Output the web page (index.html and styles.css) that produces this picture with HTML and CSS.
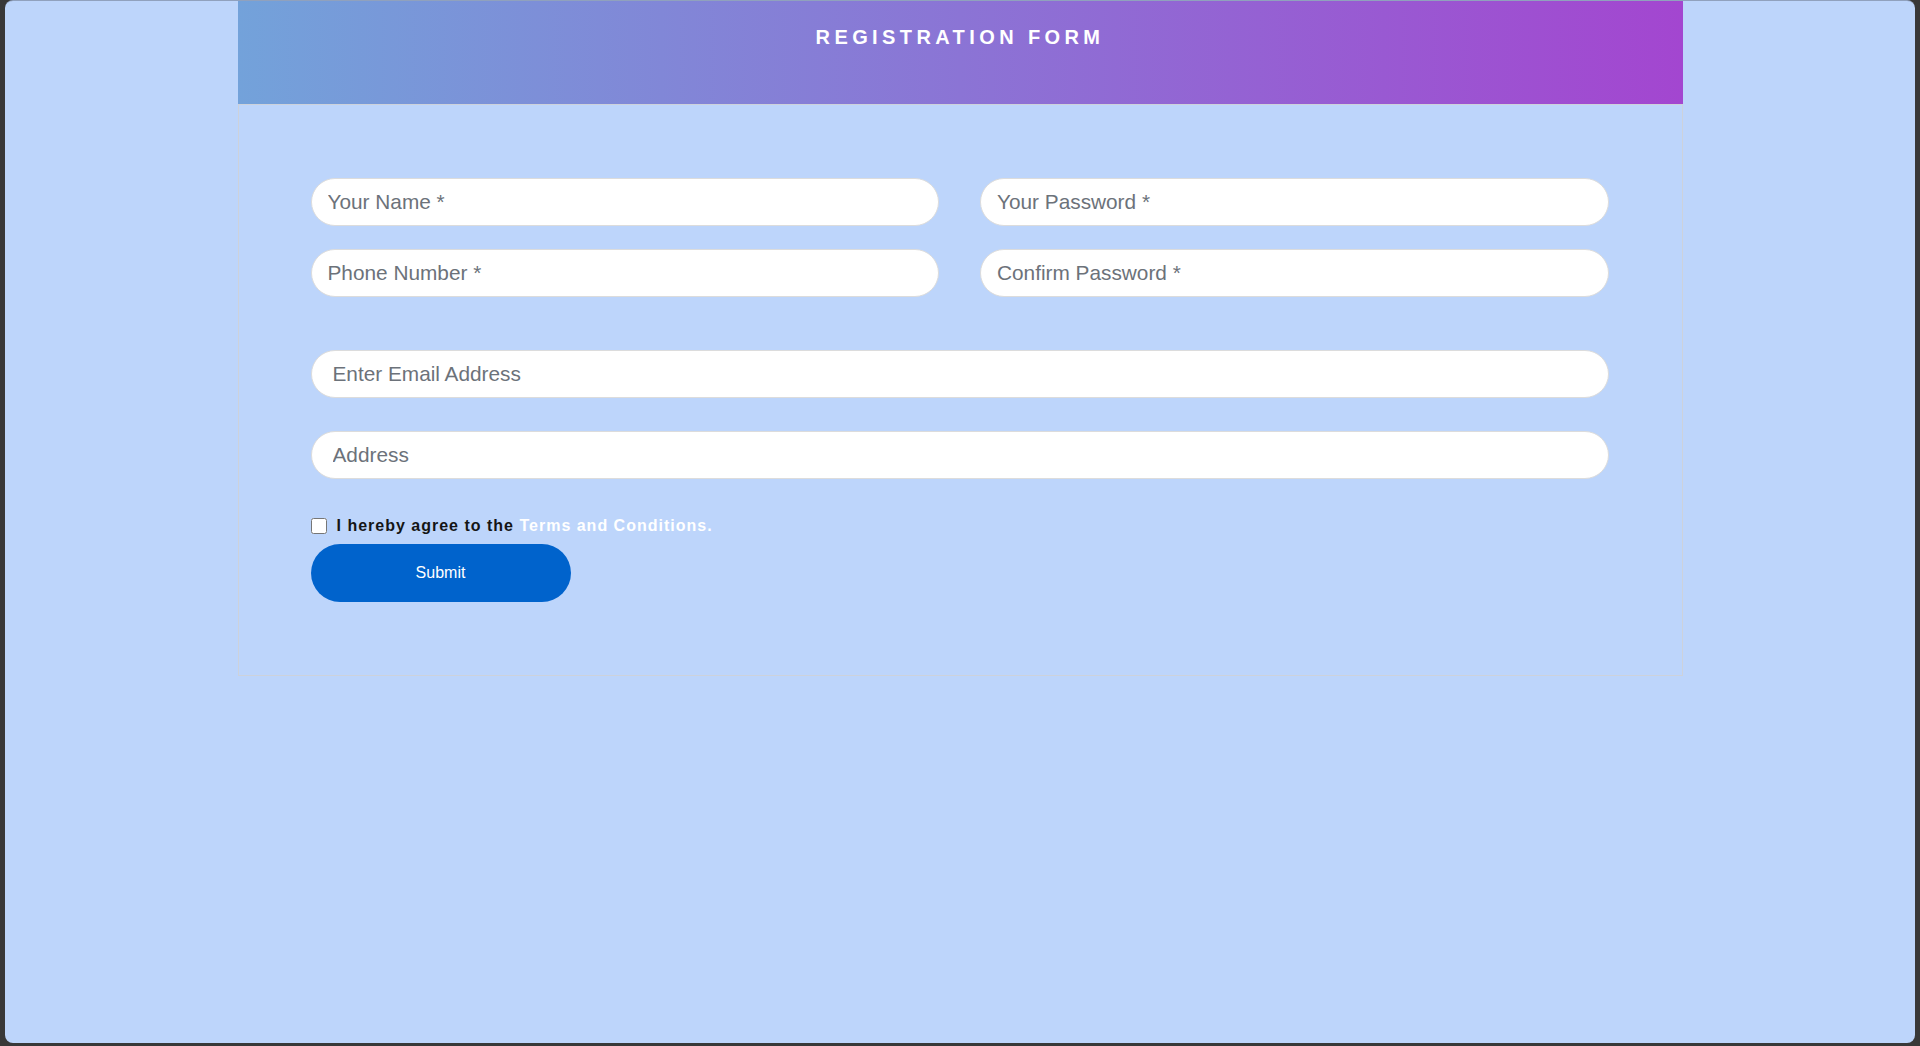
FILE: index.html
```html
<!DOCTYPE html>
<html lang="en">
<head>
<meta charset="utf-8">
<title>Registration Form</title>
<link rel="stylesheet" href="styles.css">
</head>
<body>
<div class="window">
  <div class="card">
    <div class="card-header">
      <h2 class="title">REGISTRATION FORM</h2>
    </div>
    <form class="card-body">
      <div class="grid">
        <input class="field" type="text" placeholder="Your Name *">
        <input class="field" type="password" placeholder="Your Password *">
        <input class="field" type="text" placeholder="Phone Number *">
        <input class="field" type="password" placeholder="Confirm Password *">
      </div>
      <input class="field field-wide field-email" type="email" placeholder="Enter Email Address">
      <input class="field field-wide field-address" type="text" placeholder="Address">
      <label class="agree">
        <input class="check" type="checkbox">
        <span class="agree-text">I hereby agree to the <a class="terms" href="#">Terms and Conditions.</a></span>
      </label>
      <button class="submit" type="button">Submit</button>
    </form>
  </div>
</div>
</body>
</html>
```
FILE: styles.css
```css
html, body {
  margin: 0;
  height: 100%;
}
body {
  background: #383838;
  padding: 0 5px 3px 5px;
  box-sizing: border-box;
  font-family: "Liberation Sans", Arial, sans-serif;
}
.window {
  height: 100%;
  box-sizing: border-box;
  background: #bdd5fb;
  border-top: 1px solid rgba(30, 30, 30, 0.28);
  border-radius: 8px;
  overflow: hidden;
}
.card {
  width: 1445px;
  margin: 0 auto;
}
.card-header {
  height: 103px;
  box-sizing: border-box;
  padding-top: 25px;
  background: linear-gradient(to right, #73a2da, #a346d0);
}
.title {
  margin: 0;
  text-align: center;
  color: #ffffff;
  font-size: 20px;
  line-height: 23px;
  font-weight: bold;
  letter-spacing: 4.4px;
}
.card-body {
  display: flex;
  flex-direction: column;
  align-items: flex-start;
  border: 1px solid #cdd2db;
  padding: 73px 73px 73px 72px;
}
.grid {
  display: grid;
  grid-template-columns: 1fr 1fr;
  column-gap: 41px;
  row-gap: 23px;
  width: 100%;
}
.field {
  display: block;
  box-sizing: border-box;
  height: 48px;
  border: 1px solid #dcdcdc;
  border-radius: 24px;
  background: #ffffff;
  padding: 0 16px;
  font-family: "Liberation Sans", Arial, sans-serif;
  font-size: 20.8px;
  color: #333;
  outline: none;
  width: 100%;
}
.field::placeholder {
  color: #6c727a;
}
.field-wide {
  padding: 0 21px;
}
.field-email {
  margin-top: 53px;
}
.field-address {
  margin-top: 33px;
}
.agree {
  display: flex;
  align-items: center;
  margin-top: 37px;
  height: 20px;
}
.check {
  width: 16px;
  height: 16px;
  margin: 0 10px 0 0;
}
.agree-text {
  font-size: 16px;
  font-weight: bold;
  letter-spacing: 1px;
  color: #151515;
}
.terms {
  color: #ffffff;
  text-decoration: none;
}
.submit {
  margin-top: 8px;
  width: 260px;
  height: 58px;
  border: none;
  border-radius: 29px;
  background: #0063cc;
  color: #ffffff;
  font-family: "Liberation Sans", Arial, sans-serif;
  font-size: 16px;
  cursor: pointer;
}
```
